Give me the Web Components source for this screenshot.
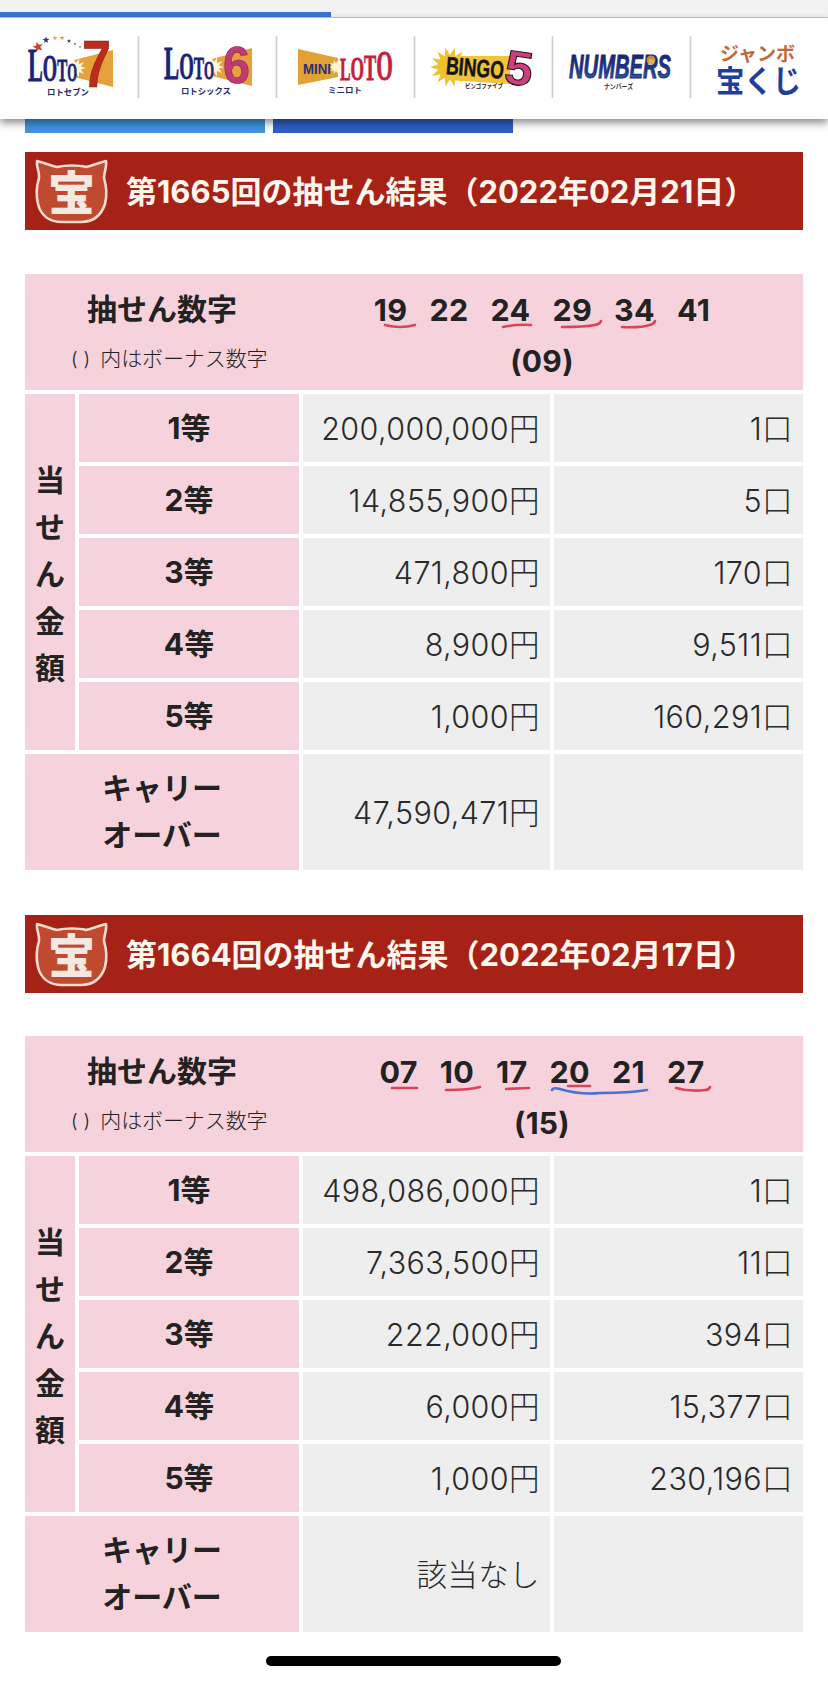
<!DOCTYPE html>
<html lang="ja">
<head>
<meta charset="utf-8">
<title>抽せん結果</title>
<style>
html,body{margin:0;padding:0;background:#fff}
body{width:828px;height:1681px;overflow:hidden;position:relative;font-family:Inter,"Noto Sans CJK JP",sans-serif;color:#222}
lt-section[second]{--top:45px;--after:43px}
</style>
</head>
<body>
<lt-statusbar></lt-statusbar>
<lt-nav>
  <lt-logo kind="loto7"></lt-logo>
  <lt-logo kind="loto6"></lt-logo>
  <lt-logo kind="mini"></lt-logo>
  <lt-logo kind="bingo"></lt-logo>
  <lt-logo kind="numbers"></lt-logo>
  <lt-logo kind="jumbo"></lt-logo>
</lt-nav>
<lt-tabs></lt-tabs>

<lt-section>
  <lt-banner>第1665回の抽せん結果（2022年02月21日）</lt-banner>
  <lt-results>
    <lt-draw numbers="19 22 24 29 34 41" bonus="(09)">
      <svg slot="marks" viewBox="25 274 778 116" fill="none" stroke="#d8465c" stroke-width="2.6" stroke-linecap="round">
        <path d="M385 325Q400 329 415 325"/>
        <path d="M503 327Q517 324 531 325"/>
        <path d="M562 327Q585 327 595 325Q600 324 601 321"/>
        <path d="M622 327Q640 328 650 325Q654 324 655 321"/>
      </svg>
    </lt-draw>
    <lt-cell side>当<br>せ<br>ん<br>金<br>額</lt-cell>
    <lt-cell label>1等</lt-cell><lt-cell value>200,000,000円</lt-cell><lt-cell value>1口</lt-cell>
    <lt-cell label>2等</lt-cell><lt-cell value>14,855,900円</lt-cell><lt-cell value>5口</lt-cell>
    <lt-cell label>3等</lt-cell><lt-cell value>471,800円</lt-cell><lt-cell value>170口</lt-cell>
    <lt-cell label>4等</lt-cell><lt-cell value>8,900円</lt-cell><lt-cell value>9,511口</lt-cell>
    <lt-cell label>5等</lt-cell><lt-cell value>1,000円</lt-cell><lt-cell value>160,291口</lt-cell>
    <lt-cell label wide>キャリー<br>オーバー</lt-cell><lt-cell value>47,590,471円</lt-cell><lt-cell value></lt-cell>
  </lt-results>
</lt-section>

<lt-section second>
  <lt-banner>第1664回の抽せん結果（2022年02月17日）</lt-banner>
  <lt-results>
    <lt-draw numbers="07 10 17 20 21 27" bonus="(15)">
      <svg slot="marks" viewBox="25 1036 778 116" fill="none" stroke="#d8465c" stroke-width="2.6" stroke-linecap="round">
        <path d="M392 1088L417 1088"/>
        <path d="M446 1090Q470 1090 480 1087"/>
        <path d="M506 1089L529 1088"/>
        <path d="M552 1090Q553 1087 560 1089Q580 1095 600 1093Q630 1093 647 1090" stroke="#4a6fd8"/>
        <path d="M568 1086L590 1086"/>
        <path d="M676 1088Q690 1092 705 1090Q709 1090 710 1087"/>
      </svg>
    </lt-draw>
    <lt-cell side>当<br>せ<br>ん<br>金<br>額</lt-cell>
    <lt-cell label>1等</lt-cell><lt-cell value>498,086,000円</lt-cell><lt-cell value>1口</lt-cell>
    <lt-cell label>2等</lt-cell><lt-cell value>7,363,500円</lt-cell><lt-cell value>11口</lt-cell>
    <lt-cell label>3等</lt-cell><lt-cell value>222,000円</lt-cell><lt-cell value>394口</lt-cell>
    <lt-cell label>4等</lt-cell><lt-cell value>6,000円</lt-cell><lt-cell value>15,377口</lt-cell>
    <lt-cell label>5等</lt-cell><lt-cell value>1,000円</lt-cell><lt-cell value>230,196口</lt-cell>
    <lt-cell label wide>キャリー<br>オーバー</lt-cell><lt-cell value>該当なし</lt-cell><lt-cell value></lt-cell>
  </lt-results>
</lt-section>

<lt-home></lt-home>

<script>
function el(name, css, html){
  customElements.define(name, class extends HTMLElement{
    connectedCallback(){
      if(this.shadowRoot) return;
      const r=this.attachShadow({mode:'open'});
      const body = typeof html==='function' ? html(this) : html;
      r.innerHTML='<style>'+css+'</style>'+body;
    }
  });
}
const CJKF="Noto Sans CJK JP";
const star=(cx,cy,r,fill,rot=0)=>{
  let p=[];
  for(let i=0;i<10;i++){
    const a=(-90+rot+i*36)*Math.PI/180, q=i%2?r*.42:r;
    p.push((cx+q*Math.cos(a)).toFixed(1)+','+(cy+q*Math.sin(a)).toFixed(1));
  }
  return '<polygon points="'+p.join(' ')+'" fill="'+fill+'"/>';
};
const burst=(cx,cy,r1,r2,n,fill)=>{
  let p=[];
  for(let i=0;i<n*2;i++){
    const a=i*Math.PI/n, q=i%2?r2:r1;
    p.push((cx+q*Math.cos(a)).toFixed(1)+','+(cy+q*Math.sin(a)).toFixed(1));
  }
  return '<polygon points="'+p.join(' ')+'" fill="'+fill+'"/>';
};
const loto=(x,y,fill,len)=>`<text x="${x}" y="${y}" fill="${fill}" font-family="Liberation Serif" font-weight="700" stroke="${fill}" stroke-width=".8" textLength="${len}" lengthAdjust="spacingAndGlyphs"><tspan font-size="46">L</tspan><tspan font-size="38">O</tspan><tspan font-size="31">T</tspan><tspan font-size="26">O</tspan></text>`;
const sub=(x,y,fs,t,len,fill='#1d2a6e')=>`<text x="${x}" y="${y}" fill="${fill}" font-size="${fs}" font-weight="700" font-family="${CJKF}" textLength="${len}" lengthAdjust="spacingAndGlyphs">${t}</text>`;
const LOGOS={
  loto7:`<svg viewBox="0 18 138 101">
    ${star(38,47,5.5,'#c8402f',-15)}${star(46,40,3.6,'#25386f')}${star(55,38,2.8,'#d9b95a')}${star(62,38,2.6,'#d39a56')}${star(69,41,2.2,'#343a72')}${star(75,44,1.6,'#c8402f')}${star(80,47,1.2,'#c8402f')}
    <polygon points="74,60 113,50 113,87 74,77" fill="#e5a23c"/>
    ${burst(76,68,10,5,10,'#fff6d8')}
    ${loto(28,81,'#1c2377',49)}
    <text x="82" y="87" font-family="Liberation Sans" font-size="66" font-weight="700" fill="#bd2b1c" stroke="#7c1a10" stroke-width=".6" textLength="29" lengthAdjust="spacingAndGlyphs">7</text>
    ${sub(47,95,8.5,'ロトセブン',42)}
  </svg>`,
  loto6:`<svg viewBox="138 18 138 101">
    <polygon points="212,59 252,48 252,86 212,76" fill="#e5a23c"/>
    ${burst(214,67,10,5,10,'#fff6d8')}
    ${loto(164,79,'#1c2377',50)}
    <text x="223" y="83" font-family="Liberation Sans" font-size="52" font-weight="700" fill="#c03a74" stroke="#8c2056" stroke-width=".6" textLength="27" lengthAdjust="spacingAndGlyphs">6</text>
    ${sub(181,94,8.5,'ロトシックス',50)}
  </svg>`,
  mini:`<svg viewBox="276 18 138 101">
    <polygon points="298,49 338,58 338,77 298,85" fill="#e3a135"/>
    ${burst(336,67,7,4,10,'#fff3cf')}
    <text x="303" y="74" font-family="Liberation Sans" font-size="15" font-weight="700" fill="#2b2f76" textLength="28" lengthAdjust="spacingAndGlyphs">MINI</text>
    <text x="340" y="80" font-family="Liberation Serif" font-weight="700" fill="#c5203f" stroke="#c5203f" stroke-width=".8" textLength="53" lengthAdjust="spacingAndGlyphs"><tspan font-size="31">L</tspan><tspan font-size="34">O</tspan><tspan font-size="36">T</tspan><tspan font-size="42">O</tspan></text>
    ${sub(328,93,8,'ミニロト',34)}
  </svg>`,
  bingo:`<svg viewBox="414 18 138 101">
    ${burst(450,67,20,12,14,'#eec12f')}
    <polygon points="448,56 510,56 510,84 448,80" fill="#f1c339"/>
    <text transform="rotate(5 470 68)" x="446" y="76" font-family="Liberation Sans" font-size="25" font-weight="700" fill="#141414" stroke="#141414" stroke-width=".5" textLength="58" lengthAdjust="spacingAndGlyphs">BINGO</text>
    <text transform="rotate(8 520 68)" x="505" y="85" font-family="Liberation Sans" font-size="48" font-weight="700" fill="#cf3f7d" stroke="#2a1420" stroke-width="1.1" textLength="28" lengthAdjust="spacingAndGlyphs">5</text>
    ${sub(465,88,6,'ビンゴファイブ',38,'#222')}
  </svg>`,
  numbers:`<svg viewBox="552 18 138 101">
    <defs><linearGradient id="ng" x1="0" y1="0" x2="0" y2="1"><stop offset="0" stop-color="#151e5e"/><stop offset=".6" stop-color="#1f3a8a"/><stop offset="1" stop-color="#3a74b5"/></linearGradient></defs>
    <text x="569" y="78" font-family="Liberation Sans" font-style="italic" font-size="33" font-weight="700" fill="url(#ng)" stroke="#1c2a70" stroke-width=".9" textLength="102" lengthAdjust="spacingAndGlyphs">NUMBERS</text>
    <circle cx="651" cy="60" r="4.5" fill="#e0a03a" opacity=".85"/>
    ${sub(604,89,7,'ナンバーズ',29,'#333')}
  </svg>`,
  jumbo:`<svg viewBox="690 18 138 101">
    <text x="720" y="61" font-family="${CJKF}" font-size="19" font-weight="700" fill="#c2693a" textLength="75" lengthAdjust="spacingAndGlyphs">ジャンボ</text>
    <text x="716" y="92" font-family="${CJKF}" font-size="31" font-weight="700" fill="#1d3f9a" textLength="85" lengthAdjust="spacingAndGlyphs">宝くじ</text>
  </svg>`
};

el('lt-statusbar',`
  :host{display:block;height:17px;background:#f2f2f2;border-bottom:1px solid #c6c6c6;position:relative}
  .p{position:absolute;left:0;bottom:0;width:331px;height:5px;background:#3a73d6}
`,'<div class="p"></div>');

el('lt-nav',`
  :host{display:flex;height:101px;background:#fff;position:relative;z-index:2;box-shadow:0 4px 8px rgba(0,0,0,.45)}
`,'<slot></slot>');

el('lt-logo',`
  :host{display:block;flex:1 1 0;position:relative;height:101px}
  :host(:not(:last-child))::after{content:"";position:absolute;right:-2px;top:18px;height:62px;width:3px;background:linear-gradient(to right,#fff,#cfcfcf,#fff)}
  svg{display:block;width:138px;height:101px;overflow:visible}
`,h=>LOGOS[h.getAttribute('kind')]);

el('lt-tabs',`
  :host{display:flex;gap:8px;padding-left:25px;height:14px}
  div{width:240px;height:14px}
  .a{background:#3f95de}.b{background:#2f5fc6}
`,'<div class="a"></div><div class="b"></div>');

el('lt-section',`
  :host{display:block;padding:var(--top,19px) 25px 0}
`,'<slot></slot>');

el('lt-banner',`
  :host{display:flex;align-items:center;height:78px;background:#a62116;margin-bottom:var(--after,44px);color:#fff}
  svg{flex:none;width:73px;height:66px;margin:0 18px 0 10px;display:block;overflow:visible}
  .t{font:700 31px/1 Inter,"Noto Sans CJK JP",sans-serif;white-space:nowrap;color:#fff6ee}
`,`<svg viewBox="0 0 73 66">
    <path d="M2 3C10 5 16 8 22 9C30 7 44 7 51 9C57 8 63 5 71 3C72 9 69 14 69 20C72 30 72 38 70 46C66 58 58 64 46 64L27 64C15 64 6 58 3 46C1 38 1 30 4 20C5 14 1 9 2 3Z" fill="#bf4a2f" stroke="#f0dccf" stroke-width="2.6" stroke-linejoin="round"/>
    <text x="36.5" y="52" text-anchor="middle" font-family="${CJKF}" font-weight="900" font-size="47" fill="#f4e8e2">宝</text>
  </svg><div class="t"><slot></slot></div>`);

el('lt-results',`
  :host{display:grid;grid-template-columns:50px 220px 247px 249px;grid-template-rows:116px repeat(5,68px) 116px;gap:4px}
`,'<slot></slot>');

el('lt-draw',`
  :host{display:grid;grid-template-columns:274px 504px;grid-column:1/-1;background:#f6d2dc;position:relative;color:#222}
  .l{display:flex;flex-direction:column;align-items:center;font-weight:700;font-size:30px;line-height:1;padding-top:20px}
  .n{font-weight:700;font-size:30.5px;letter-spacing:.3px;line-height:1;padding-top:21px;padding-right:18px;text-align:center;display:flex;flex-direction:column;align-items:center}
  .r{display:flex;gap:22px}
  .s{font-weight:300;font-size:21px;line-height:1;margin-top:24px;align-self:flex-start;padding-left:46px;white-space:nowrap;letter-spacing:-.1px}
  .s b{font-weight:300;letter-spacing:6px;margin-right:4px;font-size:19px}
  .b{margin-top:20px;font-size:30px}
  ::slotted(svg){position:absolute;left:0;top:0;width:778px;height:116px;pointer-events:none}
`,h=>`<div class="l"><span>抽せん数字</span><span class="s"><b>()</b>内はボーナス数字</span></div>
  <div class="n"><div class="r">${h.getAttribute('numbers').split(' ').map(n=>'<span>'+n+'</span>').join('')}</div><div class="b">${h.getAttribute('bonus')}</div></div>
  <slot name="marks"></slot>`);

el('lt-cell',`
  :host{display:flex;align-items:center;font-size:30px;line-height:47px;color:#2a2a2a}
  :host([label]){background:#f6d2dc;justify-content:center;text-align:center;font-weight:700;color:#222;grid-column:2}
  :host([label][wide]){grid-column:1/3}
  :host([side]){background:#f6d2dc;justify-content:center;text-align:center;font-weight:700;color:#222;grid-column:1;grid-row:2/span 5;padding-top:5px;box-sizing:border-box}
  :host([value]){background:#eeeeee;justify-content:flex-end;padding-right:10px;font-size:30.5px;letter-spacing:.4px;font-weight:300;white-space:nowrap;box-sizing:border-box}
`,'<div><slot></slot></div>');

el('lt-home',`
  :host{position:absolute;left:266px;top:1656px;width:295px;height:10px;border-radius:5px;background:#000;display:block}
`,'');
</script>
</body>
</html>
